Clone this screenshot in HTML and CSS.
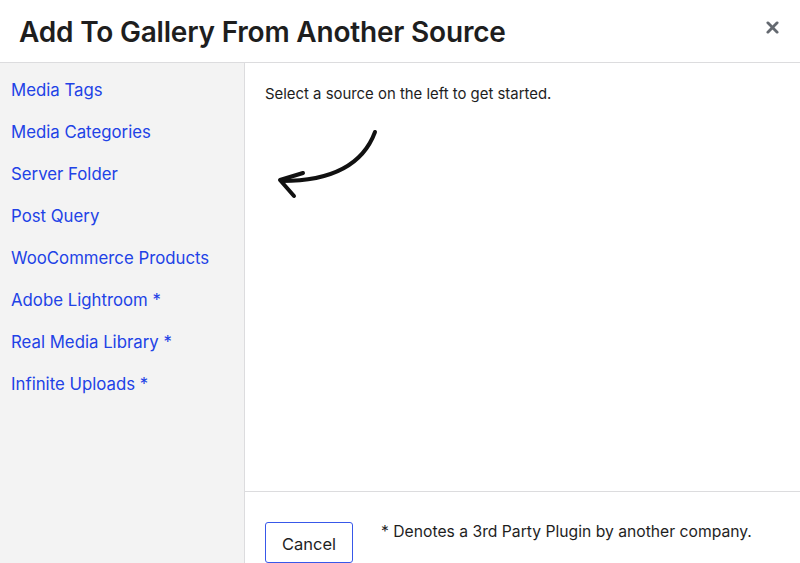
FILE: index.html
```html
<!DOCTYPE html>
<html lang="en">
<head>
  <meta charset="UTF-8">
  <title>Add To Gallery From Another Source</title>
  <link rel="stylesheet" href="styles.css">
</head>
<body>
  <div class="modal">
    <div class="modal-header">
      <h1>Add To Gallery From Another Source</h1>
      <button class="close" aria-label="Close">
        <svg width="13" height="13" viewBox="0 0 14 14"><path d="M2 2 L12 12 M12 2 L2 12" stroke="#646970" stroke-width="3" stroke-linecap="round"/></svg>
      </button>
    </div>

    <div class="modal-body">
      <ul class="sources">
        <li><a href="#">Media Tags</a></li>
        <li><a href="#">Media Categories</a></li>
        <li><a href="#">Server Folder</a></li>
        <li><a href="#">Post Query</a></li>
        <li><a href="#">WooCommerce Products</a></li>
        <li><a href="#">Adobe Lightroom *</a></li>
        <li><a href="#">Real Media Library *</a></li>
        <li><a href="#">Infinite Uploads *</a></li>
      </ul>

      <div class="main">
        <div class="content">
          <p>Select a source on the left to get started.</p>
          <svg class="arrow" width="110" height="80" viewBox="0 0 110 80">
            <path d="M105 8 C95 35 70 57 12 57" fill="none" stroke="#111" stroke-width="4" stroke-linecap="round"/>
            <path d="M33 49 L10 56 L24 72" fill="none" stroke="#111" stroke-width="4" stroke-linecap="round" stroke-linejoin="round"/>
          </svg>
        </div>
        <div class="footer">
          <button class="button">Cancel</button>
          <span class="note">* Denotes a 3rd Party Plugin by another company.</span>
        </div>
      </div>
    </div>
  </div>
</body>
</html>
```

FILE: styles.css
```css
* {
  margin: 0;
  padding: 0;
  box-sizing: border-box;
}

body {
  font-family: Inter, 'Noto Sans', sans-serif;
  color: #1e1e1e;
  background: #fff;
  width: 800px;
  height: 563px;
  overflow: hidden;
}

.modal {
  display: flex;
  flex-direction: column;
  height: 563px;
}

.modal-header {
  height: 63px;
  border-bottom: 1px solid #dcdcde;
  display: flex;
  align-items: center;
  justify-content: space-between;
  padding: 0 19px 0 19px;
  flex-shrink: 0;
}

.modal-header h1 {
  font-size: 28px;
  font-weight: 600;
  letter-spacing: -0.2px;
  margin-top: 1px;
}

.close {
  background: none;
  border: none;
  width: 20px;
  height: 20px;
  display: flex;
  align-items: center;
  justify-content: center;
  margin-right: -1px;
  margin-top: -7px;
  cursor: pointer;
}

.modal-body {
  flex: 1;
  display: flex;
}

.sources {
  list-style: none;
  width: 245px;
  background: #f3f3f3;
  border-right: 1px solid #dcdcde;
  padding-top: 15px;
  flex-shrink: 0;
}

.sources li {
  height: 42px;
  line-height: 24px;
  padding: 0 11px;
}

.sources a {
  color: #2142e6;
  font-size: 16.8px;
  text-decoration: none;
}

.main {
  flex: 1;
  display: flex;
  flex-direction: column;
}

.content {
  flex: 1;
  padding: 21px 20px 0 20px;
}

.content p {
  font-size: 14.9px;
  line-height: 20px;
  color: #1e1e1e;
}

.arrow {
  display: block;
  margin: 20px 0 0 5px;
}

.footer {
  height: 72px;
  border-top: 1px solid #dcdcde;
  display: flex;
  align-items: flex-start;
  padding: 30px 20px 0 20px;
  flex-shrink: 0;
}

.button {
  font-family: Inter, 'Noto Sans', sans-serif;
  font-size: 16.5px;
  color: #1e1e1e;
  background: #fff;
  border: 1px solid #3858e9;
  border-radius: 3px;
  width: 88px;
  height: 41px;
  padding-top: 2px;
}

.note {
  font-size: 15.7px;
  line-height: 20px;
  margin-left: 28px;
  margin-top: 0;
}
```
